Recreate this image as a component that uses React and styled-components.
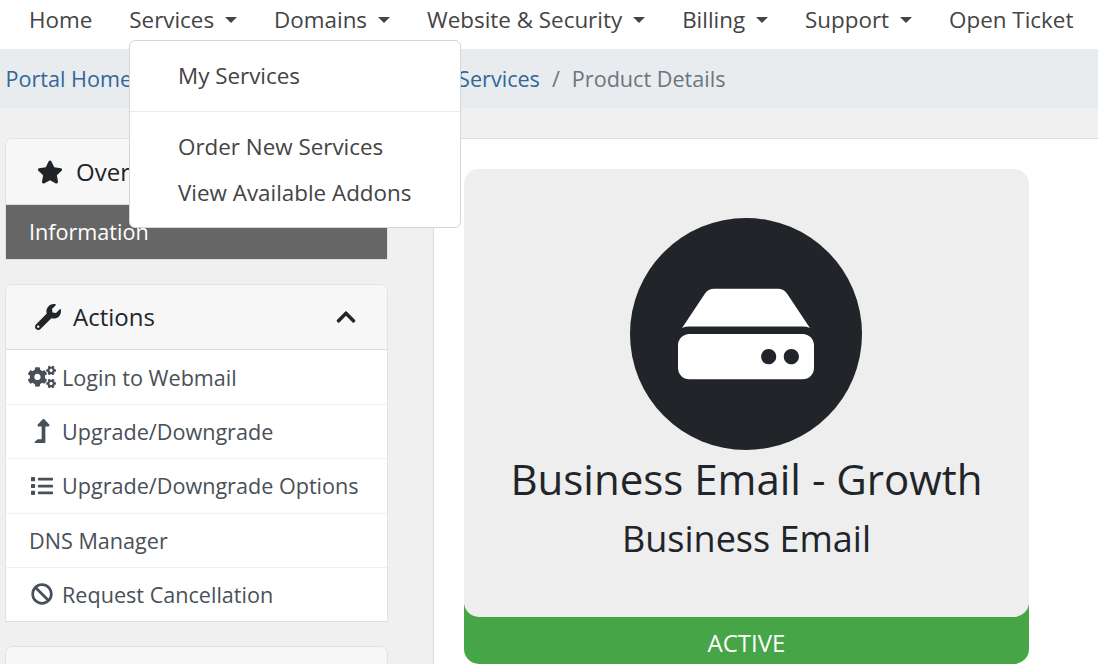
import React from "react";
import styled, { createGlobalStyle } from "styled-components";
import { FaStar, FaWrench, FaCogs, FaLevelUpAlt, FaList, FaBan, FaChevronUp, FaHdd } from "react-icons/fa";

const Global = createGlobalStyle`
  html, body { margin: 0; padding: 0; height: 664px; overflow: hidden; background: #f0f0f0; }
  body { font-family: "Open Sans", sans-serif; font-size: 21.6px; color: #212529; }
  * { box-sizing: border-box; }
`;

const Page = styled.div`width: 1098px; height: 664px; overflow: hidden; position: relative; display: flex; flex-direction: column;`;
const NavBar = styled.nav`height: 49px; flex: none; background: #fff; display: flex; align-items: flex-start; padding: 0 0 0 29px; gap: 37px; white-space: nowrap; font-size: 22.4px;`;
const NavItem = styled.a`color: #444; display: flex; align-items: center; height: 40px; line-height: 40px;`;
const Caret = styled.span`
  display: inline-block; margin-left: 11px; width: 0; height: 0;
  border-top: 6.7px solid #444; border-left: 6.7px solid transparent; border-right: 6.7px solid transparent;
`;
const Crumbs = styled.div`height: 59px; flex: none; background: #e9ecef; display: flex; align-items: center; padding-left: 5.5px; white-space: nowrap;`;
const Crumb = styled.a`color: #336699;`;
const Sep = styled.span`color: #6c757d; padding: 0 12px;`;
const Current = styled.span`color: #6c757d;`;
const Spacer = styled.div`height: 30px; flex: none;`;
const Content = styled.div`flex: 1; display: flex; min-height: 0;`;
const Sidebar = styled.aside`width: 433px; flex: none; padding-left: 5px; display: flex; flex-direction: column; gap: 24px;`;
const Card = styled.section`
  width: 383px; flex: none; background: #fff; border: 1px solid #e2e2e2; border-bottom-color: #dedede; border-radius: 7px 7px 0 0;
  overflow: hidden;
`;
const CardHead = styled.header`
  height: ${(p) => p.$h || 65}px; background: #f7f7f7; border-bottom: 1px solid #dcdcdc; display: flex; align-items: center;
  padding: 0 30px 0 ${(p) => p.$pad || 30}px; gap: ${(p) => p.$gap || 12}px; font-size: 24px; color: #212529;
  svg { flex: none; }
`;
const HeadTitle = styled.span`flex: 1; line-height: 1;`;
const ActiveRow = styled.div`height: 54px; background: #666; color: #fff; padding: 0 0 2px 23px; display: flex; align-items: center;`;
const RowList = styled.div`padding-top: 0.4px;`;
const Row = styled.div`
  height: 54.4px; padding-left: 23px; display: flex; align-items: center; color: #495057;
  border-bottom: 1px solid #f1f1f1;
  &:last-child { border-bottom: 0; height: 53px; }
`;
const RowIcon = styled.span`width: 26px; margin-right: 7px; flex: none; display: flex; align-items: center; justify-content: center; svg { display: block; flex: none; }`;
const Main = styled.main`flex: 1; background: #fff; border-top: 1px solid #dedede; border-left: 1px solid #dedede; padding: 30px 0 0 30px;`;
const Product = styled.div`width: 565px; position: relative;`;
const ProductBody = styled.div`
  position: relative; z-index: 1; height: 448px; background: #eee; border-radius: 15px; display: flex; flex-direction: column; align-items: center;
  padding-top: 49px; color: #212529;
`;
const Circle = styled.div`width: 232px; height: 232px; margin: 0 1px 0 0; border-radius: 50%; background: #212529; color: #fff; display: flex; align-items: center; justify-content: center; flex: none;`;
const Title = styled.h1`margin: -1px 0 0; font-weight: 400; font-size: 42px; line-height: 60px;`;
const Sub = styled.h2`margin: 0; font-weight: 400; font-size: 36px; line-height: 60px;`;
const Status = styled.div`
  height: 60px; margin-top: -13px; padding-top: 17px; background: #46a546; color: #fff; border-radius: 0 0 15px 15px;
  display: flex; align-items: center; justify-content: center; font-size: 24px;
`;
const Menu = styled.div`
  position: absolute; left: 129px; top: 40px; width: 332px; height: 188px; background: #fff; border: 1px solid #d6d6d6; border-radius: 6px; z-index: 5;
  padding-top: 12px; color: #444; font-size: 22.4px;
`;
const MenuItem = styled.div`height: 46px; line-height: 46px; padding-left: 48px; white-space: nowrap;`;
const MenuDiv = styled.div`height: 1px; background: #e9ecef; margin: 12px 0;`;

export default function App() {
  return (
    <Page>
      <Global />
      <NavBar>
        <NavItem>Home</NavItem>
        <NavItem>Services<Caret /></NavItem>
        <NavItem>Domains<Caret /></NavItem>
        <NavItem>Website &amp; Security<Caret /></NavItem>
        <NavItem>Billing<Caret /></NavItem>
        <NavItem>Support<Caret /></NavItem>
        <NavItem>Open Ticket</NavItem>
      </NavBar>
      <Crumbs>
        <Crumb>Portal Home</Crumb><Sep>/</Sep>
        <Crumb>Client Area</Crumb><Sep>/</Sep>
        <Crumb>My Products &amp; Services</Crumb><Sep>/</Sep>
        <Current>Product Details</Current>
      </Crumbs>
      <Spacer />
      <Content>
        <Sidebar>
          <Card>
            <CardHead $h={66} $pad={31} $gap={13}><FaStar size={26} /><HeadTitle>Overview</HeadTitle></CardHead>
            <ActiveRow>Information</ActiveRow>
          </Card>
          <Card>
            <CardHead $pad={29}><FaWrench size={26} /><HeadTitle>Actions</HeadTitle><FaChevronUp size={22} /></CardHead>
            <RowList>
              <Row><RowIcon><FaCogs size={28} /></RowIcon>Login to Webmail</Row>
              <Row><RowIcon><FaLevelUpAlt size={24} /></RowIcon>Upgrade/Downgrade</Row>
              <Row><RowIcon><FaList size={22} /></RowIcon>Upgrade/Downgrade Options</Row>
              <Row>DNS Manager</Row>
              <Row><RowIcon><FaBan size={22} /></RowIcon>Request Cancellation</Row>
            </RowList>
          </Card>
          <Card><CardHead /></Card>
        </Sidebar>
        <Main>
          <Product>
            <ProductBody>
              <Circle><FaHdd size={136} /></Circle>
              <Title>Business Email - Growth</Title>
              <Sub>Business Email</Sub>
            </ProductBody>
            <Status>ACTIVE</Status>
          </Product>
        </Main>
      </Content>
      <Menu>
        <MenuItem>My Services</MenuItem>
        <MenuDiv />
        <MenuItem>Order New Services</MenuItem>
        <MenuItem>View Available Addons</MenuItem>
      </Menu>
    </Page>
  );
}
